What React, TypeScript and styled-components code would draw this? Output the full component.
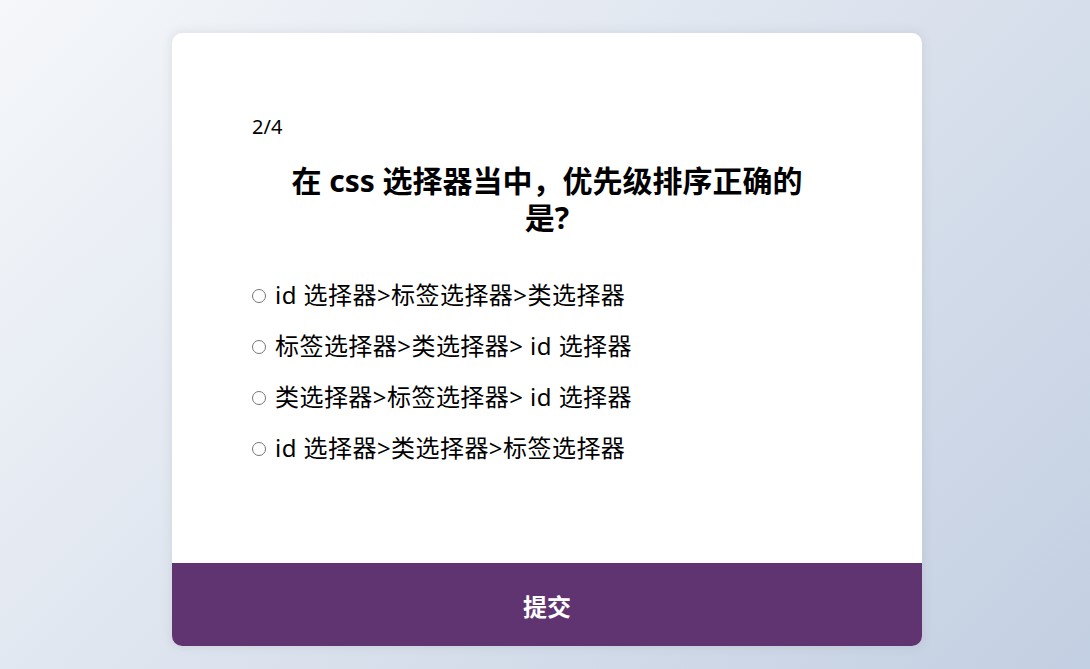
import React, { useState } from "react";
import styled, { createGlobalStyle } from "styled-components";

const GlobalStyle = createGlobalStyle`
  html, body {
    margin: 0;
    padding: 0;
  }
  body {
    font-family: "Noto Sans", "Noto Sans CJK SC", sans-serif;
    background: linear-gradient(135deg, #f5f7fa 0%, #c3cfe2 100%);
    min-height: 100vh;
  }
`;

const Page = styled.div`
  min-height: 669px;
  box-sizing: border-box;
  display: flex;
  justify-content: center;
  align-items: flex-start;
  padding: 33px 0 0 4px;
`;

const Card = styled.div`
  width: 750px;
  height: 613px;
  background: #ffffff;
  border-radius: 10px;
  box-shadow: 0 0 10px 2px rgba(100, 100, 100, 0.1);
  overflow: hidden;
  display: flex;
  flex-direction: column;
`;

const Body = styled.div`
  flex: 1;
  padding: 81px 80px 0;
  display: flex;
  flex-direction: column;
`;

const Progress = styled.div`
  font-size: 20px;
  line-height: 26px;
  color: #000;
`;

const Title = styled.h2`
  margin: 22px auto 0;
  max-width: 530px;
  font-size: 30px;
  line-height: 37px;
  font-weight: 700;
  text-align: center;
  color: #000;
`;

const Options = styled.ul`
  list-style: none;
  margin: 43px 0 0;
  padding: 0;
  display: flex;
  flex-direction: column;
  gap: 20px;
`;

const OptionRow = styled.li`
  display: flex;
  align-items: center;
  height: 31px;
`;

const OptionLabel = styled.label`
  display: flex;
  align-items: center;
  gap: 9px;
  font-size: 24px;
  letter-spacing: 0.45px;
  line-height: 31px;
  color: #000;
  cursor: pointer;
`;

const Radio = styled.input`
  appearance: none;
  -webkit-appearance: none;
  margin: 0;
  width: 14px;
  height: 14px;
  border: 1px solid #767676;
  border-radius: 50%;
  box-sizing: border-box;
  background: #fff;
  cursor: pointer;
  flex: none;
  position: relative;
  top: 1px;

  &:checked {
    border: 4px solid #5f3470;
  }
`;

const SubmitButton = styled.button`
  height: 83px;
  flex: none;
  border: none;
  background: #5f3470;
  color: #ffffff;
  font-family: "Noto Sans", "Noto Sans CJK SC", sans-serif;
  font-size: 24px;
  font-weight: 700;
  cursor: pointer;
  padding: 0;
  padding-top: 1px;
`;

const options = [
  "id 选择器>标签选择器>类选择器",
  "标签选择器>类选择器> id 选择器",
  "类选择器>标签选择器> id 选择器",
  "id 选择器>类选择器>标签选择器",
];

export default function App() {
  const [selected, setSelected] = useState<number | null>(null);
  return (
    <>
      <GlobalStyle />
      <Page>
        <Card>
          <Body>
            <Progress>2/4</Progress>
            <Title>在 css 选择器当中，优先级排序正确的是?</Title>
            <Options>
              {options.map((o, i) => (
                <OptionRow key={i}>
                  <OptionLabel>
                    <Radio
                      type="radio"
                      name="answer"
                      checked={selected === i}
                      onChange={() => setSelected(i)}
                    />
                    {o}
                  </OptionLabel>
                </OptionRow>
              ))}
            </Options>
          </Body>
          <SubmitButton>提交</SubmitButton>
        </Card>
      </Page>
    </>
  );
}
